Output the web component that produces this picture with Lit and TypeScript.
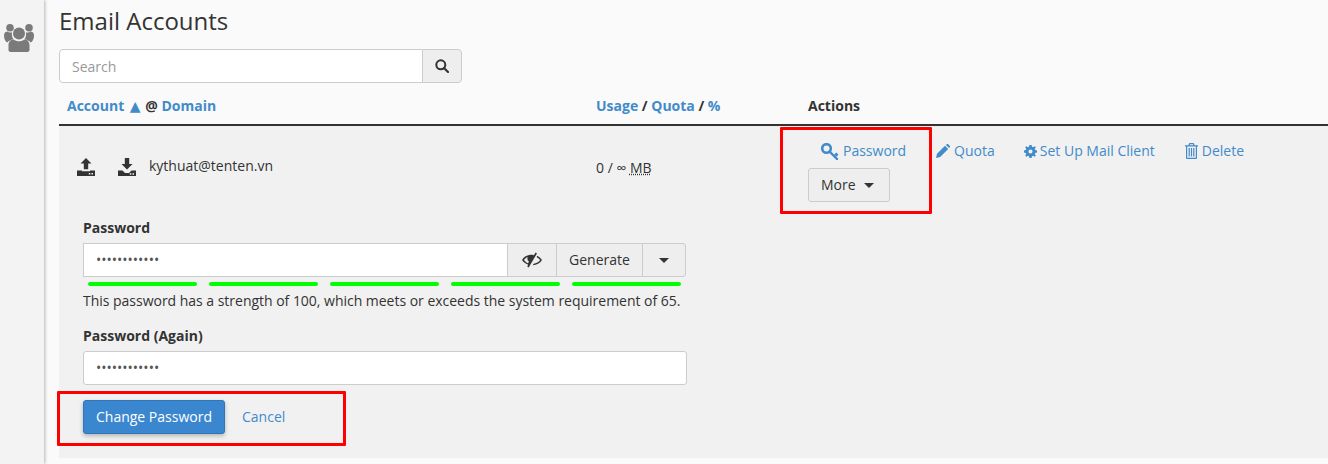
import { LitElement, html, css } from "lit";
import { customElement } from "lit/decorators.js";

const icons = {
  users: html`<svg viewBox="0 0 30 28" width="30" height="28"><g fill="#7a7a7a"><circle cx="15" cy="9.500" r="6"/><circle cx="6" cy="3.800" r="3.800"/><circle cx="25" cy="3.800" r="3.800"/><path d="M4.500 26v-5c0-3.500 2.500-5.500 5-5.500 1.500 1.200 3.500 1.800 5.500 1.800s4-.6 5.500-1.800c2.500 0 5 2 5 5.500v5c0 1.200-1 2-2 2h-17c-1 0-2-.8-2-2z"/><path d="M0 11.500c0-2.500 1.500-4 3.500-4 .8.700 1.700 1 2.700 1h1.900c-.6 2.300-.1 4.800 1.400 6.700-3 .5-5.500 2.100-6.300 3.300C1.200 17.500 0 14.500 0 11.500z"/><path d="M30 11.500c0-2.500-1.500-4-3.500-4-.8.700-1.700 1-2.700 1h-1.900c.6 2.300.1 4.800-1.400 6.700 3 .5 5.500 2.100 6.300 3.300 1.900-1 3.200-4 3.200-7z"/></g></svg>`,
  search: html`<svg viewBox="0 0 14 14" width="14" height="14"><circle cx="5.800" cy="5.800" r="4.500" fill="none" stroke="#333" stroke-width="2"/><path d="M9 9l4 4" stroke="#333" stroke-width="2.200" stroke-linecap="round"/></svg>`,
  upload: html`<svg viewBox="0 0 18 18" width="18" height="18"><path fill="#333" d="M9 0l5.500 5.500h-3.300v5.700H6.800V5.500H3.500zM0 12.500h5v.8h8v-.8h5V18H0z"/><rect x="11.800" y="15" width="1.500" height="1.500" fill="#f1f1f1"/><rect x="14.500" y="15" width="1.500" height="1.500" fill="#f1f1f1"/></svg>`,
  download: html`<svg viewBox="0 0 18 18" width="18" height="18"><path fill="#333" d="M6.800 0h4.400v6h3.300L9 11.500 3.500 6h3.300zM0 12.500h4.500L7 15h4l2.500-2.500H18V18H0z"/><rect x="11.800" y="15.200" width="1.500" height="1.500" fill="#f1f1f1"/><rect x="14.500" y="15.200" width="1.500" height="1.500" fill="#f1f1f1"/></svg>`,
  key: html`<svg viewBox="0 0 18 17" width="18" height="17"><circle cx="5.500" cy="5.500" r="4.300" fill="none" stroke="#428bca" stroke-width="2.600"/><path d="M8.500 8.500l7.500 7.500" stroke="#428bca" stroke-width="2.400" stroke-linecap="round"/><path d="M13 11.500l2.500-2 2 2.200-2 2z" fill="#428bca"/></svg>`,
  pencil: html`<svg viewBox="0 0 14 14" width="14" height="14"><path fill="#428bca" d="M0 14l1-4.200 8-8 3.200 3.200-8 8zM10 .9l.9-.9c.5-.2 1-.1 1.300.2l1.700 1.700c.2.400.2.900 0 1.200l-.9.900z"/></svg>`,
  cog: html`<svg viewBox="0 0 14 14" width="13" height="13"><path fill="#428bca" fill-rule="evenodd" d="M5.800 0h2.400l.4 1.900 1.200.5L11.500 1.300l1.200 1.200-1.100 1.700.5 1.200 1.900.4v2.400l-1.900.4-.5 1.200 1.100 1.700-1.200 1.200-1.700-1.100-1.200.5-.4 1.900H5.800l-.4-1.900-1.200-.5-1.700 1.100-1.200-1.200 1.100-1.700-.5-1.200L0 8.200V5.800l1.900-.4.500-1.200-1.100-1.700 1.200-1.200 1.700 1.100 1.200-.5zM7 4.800a2.200 2.200 0 100 4.400 2.200 2.200 0 000-4.400z"/></svg>`,
  trash: html`<svg viewBox="0 0 13 16" width="13" height="16"><path fill="#428bca" fill-rule="evenodd" d="M4.300 0h4.400l1 2.200H13v1.300h-1V15a1 1 0 01-1 1H2a1 1 0 01-1-1V3.500H0V2.200h3.300zM5 1.200L4.700 2.200h3.600L8 1.200zM2.200 3.500v11.300h8.600V3.500z"/><path fill="#428bca" d="M3.600 5h1.200v8.500H3.600zM5.900 5h1.200v8.500H5.900zM8.200 5h1.200v8.500H8.200z"/></svg>`,
  eye: html`<svg viewBox="0 0 20 16" width="20" height="16"><path fill="#333" fill-rule="evenodd" d="M0 8c1.800-3 5-5.200 9-5.200 1 0 2 .1 2.900.4L13.500.5l1.500.9-8.300 14-1.500-.9 1-1.800C3.600 11.700 1.300 10 0 8zm2 0c1 1.300 2.400 2.500 4 3.300l1-1.700C6 9 5.400 8 5.400 6.800c0-.6.100-1.200.4-1.700C4.200 5.700 3 6.700 2 8z"/><path fill="#333" d="M15 3.800c2 .9 3.800 2.400 5 4.200-1.900 3.200-5.400 5.200-9.300 5.200l1-1.500c2.600-.2 5-1.600 6.500-3.700-.9-1.200-2.100-2.100-3.400-2.800z"/></svg>`,
};

@customElement("app-root")
export class AppRoot extends LitElement {
  static styles = css`
    :host {
      display: flex;
      position: relative;
      width: 1328px;
      height: 464px;
      overflow: hidden;
      background: #fafafa;
      color: #333;
      font: 14px/20px "Open Sans", sans-serif;
    }
    a { color: #428bca; text-decoration: none; }
    svg { display: block; flex: none; }
    .side {
      width: 44px;
      flex: none;
      background: #f3f3f3;
      box-shadow: 1px 0 3px rgba(0,0,0,.28);
      box-sizing: border-box;
      padding: 24px 0 0 4px;
      z-index: 1;
    }
    .main { flex: 1; padding-left: 15px; min-width: 0; }
    h1 {
      font-size: 24px;
      font-weight: 400;
      line-height: 32px;
      margin: 5px 0 12px;
      color: #333;
    }
    .search { display: flex; width: 403px; height: 34px; box-sizing: border-box; }
    .search .input {
      flex: 1;
      background: #fff;
      border: 1px solid #ccc;
      border-radius: 4px 0 0 4px;
      padding: 7px 12px 5px;
      color: #999;
    }
    .search .btn {
      width: 40px;
      box-sizing: border-box;
      margin-left: -1px;
      border: 1px solid #ccc;
      border-radius: 0 4px 4px 0;
      background: #eee;
      display: flex;
      align-items: center;
      justify-content: center;
    }
    .head, .rowtop {
      display: grid;
      grid-template-columns: 529px 212px 1fr;
      padding-left: 8px;
    }
    .head {
      font-weight: 700;
      box-sizing: border-box;
      padding-top: 13px;
      border-bottom: 2px solid #333;
      line-height: 20px;
      height: 43px;
    }
    .arrow { font-family: "DejaVu Sans", sans-serif; font-size: 14px; font-weight: 400; margin: 0 1px 0 2px; }
    .row { background: #f1f1f1; height: 332px; }
    .rowtop { height: 88px; }
    .acct { display: flex; align-items: flex-start; padding: 32px 0 0 10px; }
    .acct .i1 { margin-right: 23px; }
    .acct .i2 { margin-right: 13px; }
    .acct span { margin-top: -2px; }
    .usage { padding-top: 32px; }
    abbr { text-decoration: underline dotted; }
    .actions { padding-top: 15px; }
    .links { display: flex; align-items: center; height: 20px; }
    .links a { display: flex; align-items: center; }
    .pw { margin-left: 13px; gap: 4px; }
    .qt { margin-left: 30px; gap: 4px; }
    .su { margin-left: 29px; gap: 3px; }
    .de { margin-left: 30px; gap: 4px; }
    .more {
      margin-top: 7px;
      width: 82px;
      height: 34px;
      box-sizing: border-box;
      border: 1px solid #ccc;
      border-radius: 3px;
      background: #eee;
      display: flex;
      align-items: center;
      padding-left: 12px;
      gap: 8px;
    }
    .caret {
      width: 0;
      height: 0;
      border: 5px solid transparent;
      border-top-color: #333;
      border-bottom: 0;
      flex: none;
    }
    .form { padding: 4px 0 0 24px; width: 604px; }
    label { display: block; font-weight: 700; line-height: 20px; margin-bottom: 5px; }
    .pgroup { display: flex; height: 34px; width: 603px; }
    .field {
      box-sizing: border-box;
      height: 34px;
      background: #fff;
      border: 1px solid #ccc;
      padding: 6px 12px;
      color: #555;
      line-height: 20px;
      overflow: hidden;
    }
    .pgroup .field { flex: 1; }
    .again { border-radius: 3px; }
    .addon {
      box-sizing: border-box;
      height: 34px;
      margin-left: -1px;
      border: 1px solid #ccc;
      background: #eee;
      display: flex;
      align-items: center;
      justify-content: center;
      color: #333;
    }
    .a1 { width: 50px; }
    .a2 { width: 87px; }
    .a3 { width: 44px; border-radius: 0 3px 3px 0; }
    .bars {
      display: flex;
      gap: 12px;
      padding: 5px 0 0 5px;
    }
    .bars i { width: 109px; height: 4px; background: #0f0; border-radius: 2px; display: block; }
    .help { margin: 5px 0 15px; line-height: 20px; letter-spacing: -0.02px; white-space: nowrap; }
    .submit { display: flex; align-items: center; margin-top: 15px; gap: 17px; }
    .primary {
      width: 142px;
      height: 34px;
      box-sizing: border-box;
      background: #3a87cf;
      border: 1px solid #2e76b8;
      border-radius: 3px;
      color: #fff;
      display: flex;
      align-items: center;
      justify-content: center;
      box-shadow: 0 2px 4px rgba(0,0,0,.25);
    }
    .red { position: absolute; border: 3px solid #f00; box-sizing: border-box; border-radius: 1px; z-index: 2; }
    .r1 { left: 780px; top: 127px; width: 152px; height: 87px; }
    .r2 { left: 57px; top: 391px; width: 289px; height: 55px; }
  `;

  render() {
    const dots = "••••••••••••";
    return html`
      <div class="side">${icons.users}</div>
      <div class="main">
        <h1>Email Accounts</h1>
        <div class="search">
          <div class="input">Search</div>
          <div class="btn">${icons.search}</div>
        </div>
        <div class="head">
          <div><a href="#">Account <span class="arrow">▲</span></a> @ <a href="#">Domain</a></div>
          <div><a href="#">Usage</a> / <a href="#">Quota</a> / <a href="#">%</a></div>
          <div>Actions</div>
        </div>
        <div class="row">
          <div class="rowtop">
            <div class="acct">
              <div class="i1">${icons.upload}</div>
              <div class="i2">${icons.download}</div>
              <span>kythuat@tenten.vn</span>
            </div>
            <div class="usage">0 / ∞ <abbr>MB</abbr></div>
            <div class="actions">
              <div class="links">
                <a class="pw" href="#">${icons.key}Password</a>
                <a class="qt" href="#">${icons.pencil}Quota</a>
                <a class="su" href="#">${icons.cog}Set Up Mail Client</a>
                <a class="de" href="#">${icons.trash}Delete</a>
              </div>
              <div class="more">More <span class="caret"></span></div>
            </div>
          </div>
          <div class="form">
            <label>Password</label>
            <div class="pgroup">
              <div class="field">${dots}</div>
              <div class="addon a1">${icons.eye}</div>
              <div class="addon a2">Generate</div>
              <div class="addon a3"><span class="caret"></span></div>
            </div>
            <div class="bars"><i></i><i></i><i></i><i></i><i></i></div>
            <div class="help">This password has a strength of 100, which meets or exceeds the system requirement of 65.</div>
            <label>Password (Again)</label>
            <div class="field again">${dots}</div>
            <div class="submit">
              <div class="primary">Change Password</div>
              <a href="#">Cancel</a>
            </div>
          </div>
        </div>
      </div>
      <div class="red r1"></div>
      <div class="red r2"></div>
    `;
  }
}
